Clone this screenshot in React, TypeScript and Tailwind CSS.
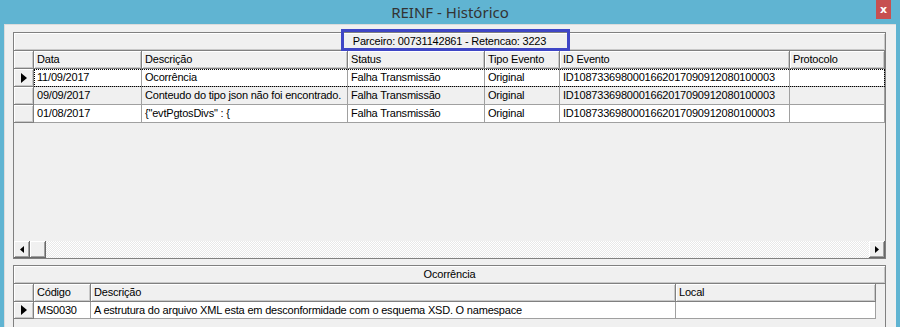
import React from "react";

const HDR =
  "h-full shrink-0 bg-[#f0f0f0] border-r border-b border-[#808080] shadow-[inset_1px_1px_0_#ffffff,inset_-1px_-1px_0_#c8c8c8] px-[3px] flex items-center whitespace-nowrap overflow-hidden";
const CELL =
  "h-full shrink-0 border-r border-b border-[#a0a0a0] px-[3px] flex items-center whitespace-nowrap overflow-hidden";

function Arrow() {
  return (
    <svg width="6" height="10" viewBox="0 0 6 10" className="block">
      <polygon points="0,0 6,5 0,10" fill="#000" />
    </svg>
  );
}

function Indicator({ active }: { active?: boolean }) {
  return (
    <div className={`${HDR} w-[20px] justify-center`}>{active ? <Arrow /> : null}</div>
  );
}

const topCols = [
  "w-[108px]",
  "w-[206px]",
  "w-[137px]",
  "w-[75px]",
  "w-[230px]",
  "flex-1",
];
const topHead = ["Data", "Descrição", "Status", "Tipo Evento", "ID Evento", "Protocolo"];
const topRows = [
  ["11/09/2017", "Ocorrência", "Falha Transmissão", "Original", "ID1087336980001662017090912080100003", ""],
  ["09/09/2017", "Conteudo do tipo json não foi encontrado.", "Falha Transmissão", "Original", "ID1087336980001662017090912080100003", ""],
  ["01/08/2017", "{\"evtPgtosDivs\" : {", "Falha Transmissão", "Original", "ID1087336980001662017090912080100003", ""],
];

const botCols = ["w-[57px]", "w-[585px]", "w-[200px]"];
const botHead = ["Código", "Descrição", "Local"];
const botRow = ["MS0030", "A estrutura do arquivo XML esta em desconformidade com o esquema XSD. O namespace", ""];

function ScrollBtn({ dir }: { dir: "l" | "r" }) {
  return (
    <div className="w-[16px] h-full shrink-0 bg-[#f0f0f0] border-r border-b border-[#696969] shadow-[inset_1px_1px_0_#ffffff,inset_-1px_-1px_0_#a0a0a0] flex items-center justify-center">
      <svg width="4" height="7" viewBox="0 0 4 7" className="block">
        {dir === "l" ? (
          <polygon points="4,0 0,3.5 4,7" fill="#000" />
        ) : (
          <polygon points="0,0 4,3.5 0,7" fill="#000" />
        )}
      </svg>
    </div>
  );
}

export default function App() {
  return (
    <div className="w-[900px] h-[327px] bg-[#60b4d2] flex flex-col overflow-hidden font-['Liberation_Sans',Arial,sans-serif] text-[11px] tracking-[-0.2px] text-black leading-none">
      {/* Title bar */}
      <div className="h-[24px] shrink-0 flex items-start">
        <div className="flex-1 h-full flex items-center justify-center pl-[24px] font-['Noto_Sans',sans-serif] text-[15px] tracking-normal text-[#333333]">
          REINF - Histórico
        </div>
        <div className="w-[15px] h-[19px] bg-[#c75050] text-white font-bold text-[11px] flex items-center justify-center mr-[9px] font-['DejaVu_Sans',sans-serif]">
          x
        </div>
      </div>

      {/* Client area */}
      <div className="flex-1 mx-[4px] bg-[#f0f0f0] border-l border-t border-[#dcdcdc] pt-[7px] pl-[8px] flex flex-col gap-[6px]">
        {/* Top grid */}
        <div className="w-[873px] h-[227px] shrink-0 border border-[#808080] bg-[#f0f0f0] flex flex-col">
          <div className="h-[18px] shrink-0 relative bg-[#f0f0f0] border-b border-[#808080] shadow-[inset_1px_1px_0_#ffffff,inset_-1px_-1px_0_#c8c8c8] flex items-center justify-center">
            <span>Parceiro: 00731142861 - Retencao: 3223</span>
            <div className="absolute left-[327px] top-[-4px] w-[229px] h-[22px] border-[3px] border-[#3f46c6]" />
          </div>
          <div className="h-[18px] shrink-0 flex">
            <Indicator />
            {topHead.map((h, i) => (
              <div key={i} className={`${HDR} ${topCols[i]}`}>
                {h}
              </div>
            ))}
          </div>
          {topRows.map((r, ri) => (
            <div key={ri} className="h-[18px] shrink-0 flex">
              <Indicator active={ri === 0} />
              <div
                className={`flex-1 flex h-full ${ri === 1 ? "bg-[#f0f0f0]" : "bg-white"} ${
                  ri === 0 ? "outline outline-1 outline-dotted outline-black -outline-offset-1" : ""
                }`}
              >
                {r.map((c, ci) => (
                  <div key={ci} className={`${CELL} ${topCols[ci]}`}>
                    {c}
                  </div>
                ))}
              </div>
            </div>
          ))}
          <div className="flex-1" />
          <div className="h-[17px] shrink-0 flex">
            <ScrollBtn dir="l" />
            <div className="w-[16px] h-full shrink-0 bg-[#f0f0f0] border-r border-b border-[#696969] shadow-[inset_1px_1px_0_#ffffff,inset_-1px_-1px_0_#a0a0a0]" />
            <div className="flex-1 h-full bg-[repeating-conic-gradient(#ffffff_0%_25%,#e8e8e8_0%_50%)] bg-size-[2px_2px]" />
            <ScrollBtn dir="r" />
          </div>
        </div>

        {/* Bottom grid */}
        <div className="w-[873px] flex-1 border-l border-t border-r border-[#808080] bg-[#f0f0f0] flex flex-col">
          <div className="h-[18px] shrink-0 bg-[#f0f0f0] border-b border-[#808080] shadow-[inset_1px_1px_0_#ffffff,inset_-1px_-1px_0_#c8c8c8] flex items-center justify-center">
            Ocorrência
          </div>
          <div className="h-[18px] shrink-0 flex">
            <Indicator />
            {botHead.map((h, i) => (
              <div key={i} className={`${HDR} ${botCols[i]}`}>
                {h}
              </div>
            ))}
          </div>
          <div className="h-[17px] shrink-0 flex">
            <Indicator active />
            {botRow.map((c, ci) => (
              <div key={ci} className={`${CELL} ${botCols[ci]} bg-white`}>
                {c}
              </div>
            ))}
          </div>
        </div>
      </div>
    </div>
  );
}
